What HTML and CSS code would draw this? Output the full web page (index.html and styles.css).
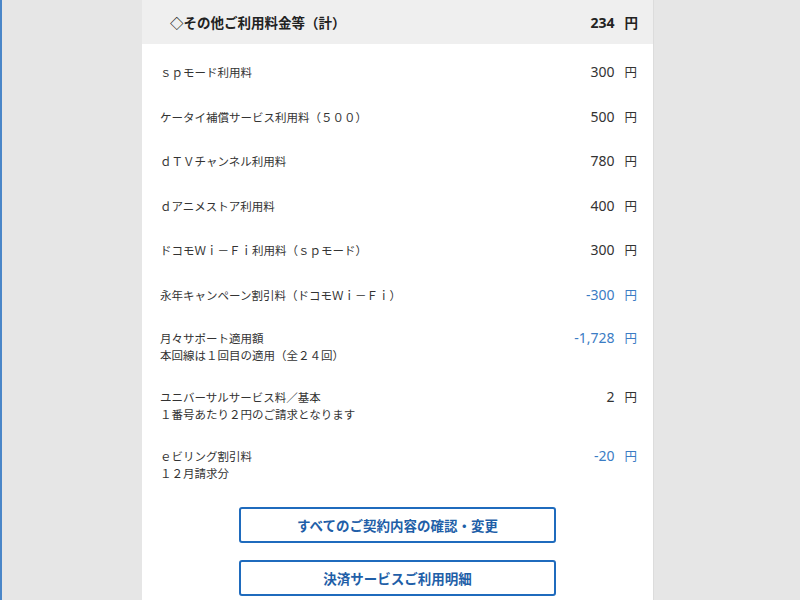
FILE: index.html
```html
<!DOCTYPE html>
<html lang="ja">
<head>
<meta charset="utf-8">
<link rel="stylesheet" href="styles.css">
</head>
<body>
<div class="page">
  <div class="panel">
    <div class="head">
      <span class="head-label">◇その他ご利用料金等（計）</span>
      <span class="head-amt"><span class="num">234</span>円</span>
    </div>
    <div class="rows">
      <div class="row"><div class="label">ｓｐモード利用料</div><div class="amt"><span class="num">300</span>円</div></div>
      <div class="row"><div class="label">ケータイ補償サービス利用料（５００）</div><div class="amt"><span class="num">500</span>円</div></div>
      <div class="row"><div class="label">ｄＴＶチャンネル利用料</div><div class="amt"><span class="num">780</span>円</div></div>
      <div class="row"><div class="label">ｄアニメストア利用料</div><div class="amt"><span class="num">400</span>円</div></div>
      <div class="row"><div class="label">ドコモＷｉ－Ｆｉ利用料（ｓｐモード）</div><div class="amt"><span class="num">300</span>円</div></div>
      <div class="row"><div class="label">永年キャンペーン割引料（ドコモＷｉ－Ｆｉ）</div><div class="amt neg"><span class="num">-300</span>円</div></div>
      <div class="row two"><div class="label">月々サポート適用額<br>本回線は１回目の適用（全２４回）</div><div class="amt neg"><span class="num">-1,728</span>円</div></div>
      <div class="row two"><div class="label">ユニバーサルサービス料／基本<br>１番号あたり２円のご請求となります</div><div class="amt"><span class="num">2</span>円</div></div>
      <div class="row two"><div class="label">ｅビリング割引料<br>１２月請求分</div><div class="amt neg"><span class="num">-20</span>円</div></div>
    </div>
    <div class="buttons">
      <a class="btn">すべてのご契約内容の確認・変更</a>
      <a class="btn">決済サービスご利用明細</a>
    </div>
  </div>
</div>
</body>
</html>
```
FILE: styles.css
```css
html, body {
  margin: 0;
  padding: 0;
  background: #e6e6e6;
  font-family: "Noto Sans CJK JP", "Noto Sans", sans-serif;
  color: #333;
}
.page {
  height: 600px;
  overflow: hidden;
  border-left: 2px solid #4a86c8;
  box-sizing: border-box;
}
.panel {
  margin-left: 140px;
  width: 511px;
  background: #fff;
  min-height: 600px;
  border-right: 1px solid #dcdcdc;
}
.head {
  display: flex;
  justify-content: space-between;
  align-items: center;
  height: 44px;
  background: #efefef;
  padding: 0 15px 0 28px;
  box-sizing: border-box;
  font-weight: bold;
  font-size: 13.5px;
  color: #222;
}
.head-amt .num {
  font-family: "Noto Sans", sans-serif;
  font-size: 14px;
  margin-right: 10px;
}
.rows {
  padding-top: 6px;
}
.row {
  display: flex;
  justify-content: space-between;
  align-items: flex-start;
  padding: 13px 16px 13px 18px;
  font-size: 11.5px;
  line-height: 18.5px;
}
.row.two {
  line-height: 16.5px;
}
.label {
  color: #333;
}
.amt {
  font-size: 12.5px;
  color: #333;
  white-space: nowrap;
}
.num {
  font-family: "Noto Sans", sans-serif;
  font-size: 14px;
  margin-right: 10px;
}
.amt.neg {
  color: #3b7cc4;
}
.buttons {
  display: flex;
  flex-direction: column;
  align-items: center;
  gap: 17px;
  padding-top: 13px;
}
.btn {
  display: flex;
  align-items: center;
  justify-content: center;
  width: 317px;
  height: 36px;
  box-sizing: border-box;
  border: 2px solid #1f6bbd;
  border-radius: 3px;
  color: #1f5fa8;
  font-weight: bold;
  font-size: 13.5px;
  text-decoration: none;
}
```
